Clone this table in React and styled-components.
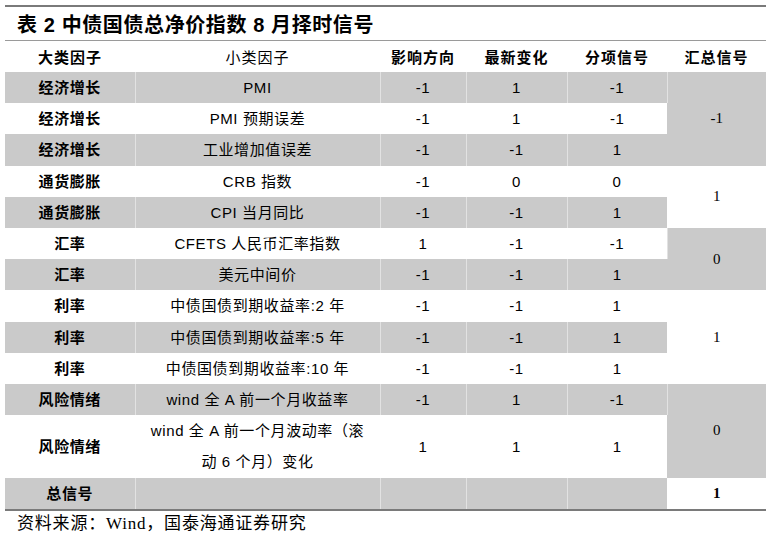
import React from 'react';
import styled, { createGlobalStyle } from 'styled-components';

const GlobalStyle = createGlobalStyle`
  body {
    margin: 0;
    background: #fff;
    color: #000;
    font-family: "Liberation Sans", "Noto Sans CJK SC", sans-serif;
  }
`;

const Wrapper = styled.div`
  width: 761px;
  margin: 5px 0 0 5px;
`;

const Title = styled.div`
  border-top: 2px solid #7a7a7a;
  border-bottom: 1px solid #9a9a9a;
  height: 33px;
  padding-left: 12px;
  display: flex;
  align-items: center;
  font-size: 20px;
  font-weight: 700;
  letter-spacing: 0.6px;
  font-family: "Liberation Sans", "Noto Sans CJK SC", sans-serif;
  white-space: pre;
`;

const Table = styled.table`
  width: 761px;
  table-layout: fixed;
  border-collapse: collapse;
  border-bottom: 2px solid #7a7a7a;
`;

const Th = styled.th`
  height: 31px;
  padding: 0;
  font-size: 15px;
  letter-spacing: 1px;
  font-weight: ${(p) => (p.$light ? 400 : 700)};
  font-family: "Liberation Sans", "Noto Sans CJK SC", sans-serif;
  text-align: center;
  vertical-align: middle;
`;

const Td = styled.td`
  height: 31.2px;
  padding: 0;
  font-size: 15px;
  line-height: 31.2px;
  letter-spacing: ${(p) => (p.$serif ? '0' : '0.6px')};
  text-align: center;
  vertical-align: middle;
  background: ${(p) => (p.$shade ? '#cacaca' : '#fff')};
  font-weight: ${(p) => (p.$bold ? 700 : 400)};
  font-family: ${(p) =>
    p.$serif
      ? '"Liberation Serif", "Noto Sans CJK SC", serif'
      : '"Liberation Sans", "Noto Sans CJK SC", sans-serif'};
  border-right: 1px solid rgba(255, 255, 255, 0.45);
  &:last-child {
    border-right: none;
  }
`;

const Source = styled.div`
  height: 26px;
  line-height: 26px;
  padding-left: 12px;
  font-size: 17px;
  letter-spacing: 0.8px;
  font-family: "Liberation Serif", "Noto Sans CJK SC", serif;
`;

const rows = [
  { big: '经济增长', small: 'PMI', dir: '-1', chg: '1', sig: '-1', sum: { v: '-1', span: 3 } },
  { big: '经济增长', small: 'PMI 预期误差', dir: '-1', chg: '1', sig: '-1' },
  { big: '经济增长', small: '工业增加值误差', dir: '-1', chg: '-1', sig: '1' },
  { big: '通货膨胀', small: 'CRB 指数', dir: '-1', chg: '0', sig: '0', sum: { v: '1', span: 2 } },
  { big: '通货膨胀', small: 'CPI 当月同比', dir: '-1', chg: '-1', sig: '1' },
  { big: '汇率', small: 'CFETS 人民币汇率指数', dir: '1', chg: '-1', sig: '-1', sum: { v: '0', span: 2 } },
  { big: '汇率', small: '美元中间价', dir: '-1', chg: '-1', sig: '1' },
  { big: '利率', small: '中债国债到期收益率:2 年', dir: '-1', chg: '-1', sig: '1', sum: { v: '1', span: 3 } },
  { big: '利率', small: '中债国债到期收益率:5 年', dir: '-1', chg: '-1', sig: '1' },
  { big: '利率', small: '中债国债到期收益率:10 年', dir: '-1', chg: '-1', sig: '1' },
  { big: '风险情绪', small: 'wind 全 A 前一个月收益率', dir: '-1', chg: '1', sig: '-1', sum: { v: '0', span: 2 } },
  {
    big: '风险情绪',
    small: (
      <>
        wind 全 A 前一个月波动率（滚
        <br />
        动 6 个月）变化
      </>
    ),
    dir: '1',
    chg: '1',
    sig: '1',
  },
];

const sumShade = [true, false, true, false, true];

const App = () => {
  let group = -1;
  return (
    <Wrapper>
      <GlobalStyle />
      <Title>表 2 中债国债总净价指数 8 月择时信号</Title>
      <Table>
        <colgroup>
          <col style={{ width: 130 }} />
          <col style={{ width: 245 }} />
          <col style={{ width: 86 }} />
          <col style={{ width: 101 }} />
          <col style={{ width: 100 }} />
          <col style={{ width: 99 }} />
        </colgroup>
        <thead>
          <tr>
            <Th>大类因子</Th>
            <Th $light>小类因子</Th>
            <Th>影响方向</Th>
            <Th>最新变化</Th>
            <Th>分项信号</Th>
            <Th>汇总信号</Th>
          </tr>
        </thead>
        <tbody>
          {rows.map((r, i) => {
            const shade = i % 2 === 0;
            if (r.sum) group += 1;
            return (
              <tr key={i}>
                <Td $shade={shade} $bold>{r.big}</Td>
                <Td $shade={shade}>{r.small}</Td>
                <Td $shade={shade}>{r.dir}</Td>
                <Td $shade={shade}>{r.chg}</Td>
                <Td $shade={shade}>{r.sig}</Td>
                {r.sum && (
                  <Td $shade={sumShade[group]} $serif rowSpan={r.sum.span}>
                    {r.sum.v}
                  </Td>
                )}
              </tr>
            );
          })}
          <tr>
            <Td $shade $bold>总信号</Td>
            <Td $shade />
            <Td $shade />
            <Td $shade />
            <Td $shade />
            <Td $serif $bold>1</Td>
          </tr>
        </tbody>
      </Table>
      <Source>资料来源：Wind，国泰海通证券研究</Source>
    </Wrapper>
  );
};

export default App;
